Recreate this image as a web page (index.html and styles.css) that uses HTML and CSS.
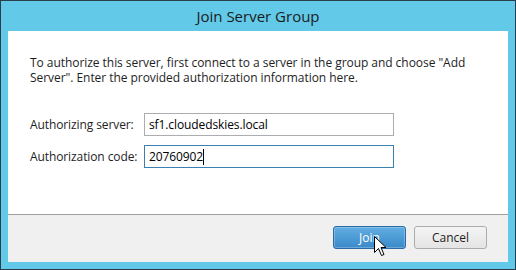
FILE: index.html
```html
<!DOCTYPE html>
<html lang="en">
<head>
  <meta charset="UTF-8" />
  <title>Join Server Group</title>
  <link rel="stylesheet" href="styles.css">
</head>
<body>
  <div class="window">
    <div class="titlebar">Join Server Group</div>
    <div class="client">
      <div class="content">
        <p class="intro">To authorize this server, first connect to a server in the group and choose "Add Server". Enter the provided authorization information here.</p>
        <div class="row">
          <label class="label">Authorizing server:</label>
          <div class="field">sf1.cloudedskies.local</div>
        </div>
        <div class="row">
          <label class="label">Authorization code:</label>
          <div class="field focused">20760902<span class="caret"></span></div>
        </div>
      </div>
      <div class="footer">
        <button class="btn primary">Join</button>
        <button class="btn">Cancel</button>
        <svg class="pointer" width="13" height="21" viewBox="0 0 13 21">
          <path d="M0.5 0.5 L0.5 16.5 L4.5 12.5 L7.5 19.5 L10 18.5 L7 11.5 L12 11.5 Z" fill="#fff" stroke="#000" stroke-width="1" stroke-linejoin="miter"/>
        </svg>
      </div>
    </div>
  </div>
</body>
</html>
```

FILE: styles.css
```css
* { box-sizing: border-box; }
html, body {
  margin: 0;
  padding: 0;
  background: #fff;
}
.window {
  width: 516px;
  height: 270px;
  border: 1px solid #2a3d4a;
  background: #63c9e8;
  padding: 0 7px 7px;
  display: flex;
  flex-direction: column;
  font-family: "Open Sans", "Noto Sans", sans-serif;
}
.titlebar {
  height: 30px;
  display: flex;
  align-items: center;
  justify-content: center;
  font-size: 15px;
  color: #1b1b1b;
  padding-bottom: 1px;
}
.client {
  flex: 1;
  background: #fff;
  display: flex;
  flex-direction: column;
}
.content {
  height: 183px;
  padding: 24px 22px 0;
  font-size: 12px;
  color: #1e1e1e;
}
.intro {
  margin: 0 0 28px;
  line-height: 15px;
  letter-spacing: -0.05px;
}
.row {
  display: flex;
  align-items: center;
  margin-bottom: 9px;
}
.label {
  width: 114px;
  letter-spacing: -0.1px;
}
.field {
  width: 250px;
  height: 23px;
  border: 1px solid #acadb1;
  padding: 0 4px;
  display: flex;
  align-items: center;
  color: #000;
  letter-spacing: -0.1px;
}
.field.focused {
  border-color: #3c7fb1;
}
.caret {
  display: inline-block;
  width: 1px;
  height: 16px;
  background: #000;
}
.footer {
  flex: 1;
  border-top: 1px solid #a0a0a0;
  background: #f0f0f0;
  display: flex;
  justify-content: flex-end;
  align-items: flex-start;
  gap: 8px;
  padding: 11px 21px 0 0;
  position: relative;
}
.btn {
  width: 73px;
  height: 23px;
  border: 1px solid #acacac;
  border-radius: 3px;
  background: linear-gradient(#f4f4f4, #e4e4e4);
  font-family: "Open Sans", "Noto Sans", sans-serif;
  font-size: 12px;
  color: #1e1e1e;
  padding: 0;
}
.btn.primary {
  border-color: #2a6aa6;
  background: linear-gradient(#62aee2, #3a89c9);
  color: #fff;
  box-shadow: inset 0 0 0 1px rgba(255, 255, 255, 0.25);
}
.pointer {
  position: absolute;
  left: 366px;
  top: 21px;
}
```
